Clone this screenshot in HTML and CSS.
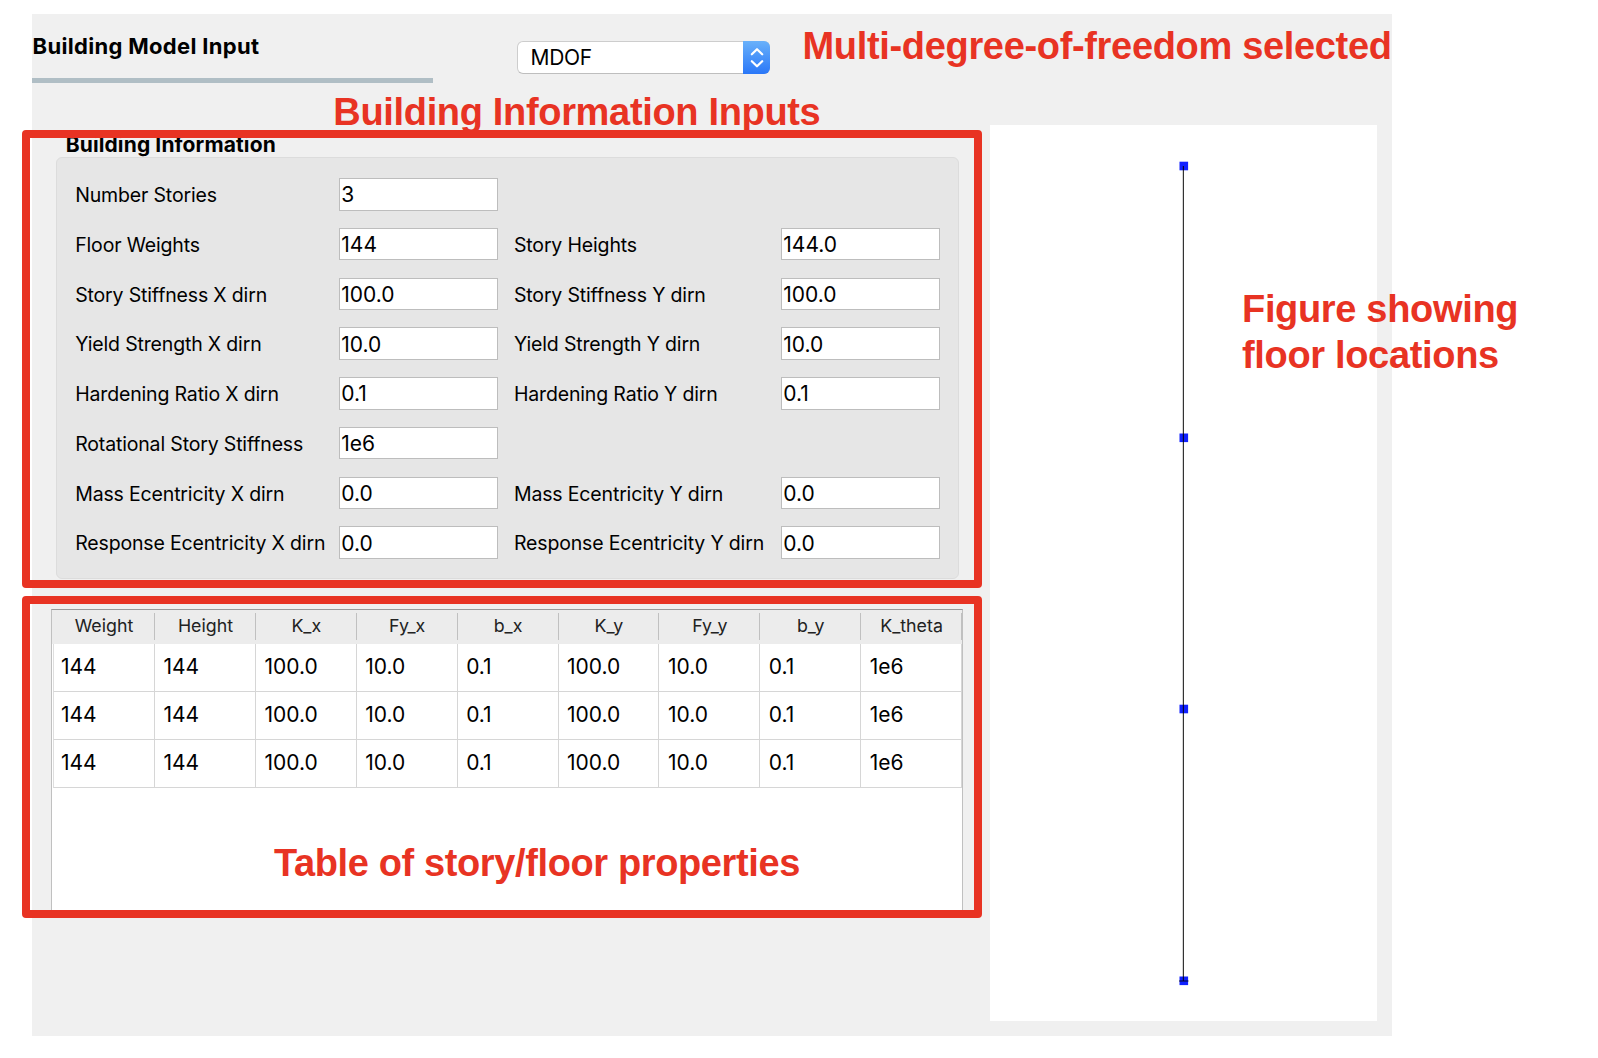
FILE: index.html
```html
<!DOCTYPE html>
<html lang="en">
<head>
<meta charset="utf-8">
<title>Building Model Input</title>
<link rel="stylesheet" href="styles.css">
</head>
<body>
<main class="window">
  <header class="topbar">
    <h1 class="page-title">Building Model Input</h1>
    <div class="select"><span>MDOF</span>
      <span class="select-button"><svg width="14" height="22" viewBox="0 0 14 22" fill="none" stroke="#fff" stroke-width="2.2" stroke-linecap="round" stroke-linejoin="round"><path d="M1.8 7.3 7 2.2l5.2 5.1M1.8 14.2 7 19.3l5.2-5.1"/></svg></span>
    </div>
  </header>
  <div class="content">
    <section class="left">
      <h2 class="group-title">Building Information</h2>
      <form class="group">
        <label>Number Stories</label><input value="3"><i></i><i></i>
        <label>Floor Weights</label><input value="144"><label class="second">Story Heights</label><input value="144.0">
        <label>Story Stiffness X dirn</label><input value="100.0"><label class="second">Story Stiffness Y dirn</label><input value="100.0">
        <label>Yield Strength X dirn</label><input value="10.0"><label class="second">Yield Strength Y dirn</label><input value="10.0">
        <label>Hardening Ratio X dirn</label><input value="0.1"><label class="second">Hardening Ratio Y dirn</label><input value="0.1">
        <label>Rotational Story Stiffness</label><input value="1e6"><i></i><i></i>
        <label>Mass Ecentricity X dirn</label><input value="0.0"><label class="second">Mass Ecentricity Y dirn</label><input value="0.0">
        <label>Response Ecentricity X dirn</label><input value="0.0"><label class="second">Response Ecentricity Y dirn</label><input value="0.0">
      </form>
      <div class="table-box">
        <table class="floors">
          <colgroup><col class="first-col"><col span="8"></colgroup>
          <thead><tr><th>Weight</th><th>Height</th><th>K_x</th><th>Fy_x</th><th>b_x</th><th>K_y</th><th>Fy_y</th><th>b_y</th><th>K_theta</th></tr></thead>
          <tbody>
            <tr><td>144</td><td>144</td><td>100.0</td><td>10.0</td><td>0.1</td><td>100.0</td><td>10.0</td><td>0.1</td><td>1e6</td></tr>
            <tr><td>144</td><td>144</td><td>100.0</td><td>10.0</td><td>0.1</td><td>100.0</td><td>10.0</td><td>0.1</td><td>1e6</td></tr>
            <tr><td>144</td><td>144</td><td>100.0</td><td>10.0</td><td>0.1</td><td>100.0</td><td>10.0</td><td>0.1</td><td>1e6</td></tr>
          </tbody>
        </table>
      </div>
    </section>
    <section class="figure">
      <svg width="387" height="896" viewBox="0 0 387 896">
        <g fill="#1021ff"><rect x="189.5" y="36.7" width="8.6" height="8.6"/><rect x="189.5" y="308.5" width="8.6" height="8.6"/><rect x="189.5" y="579.7" width="8.6" height="8.6"/><rect x="189.5" y="851.5" width="8.6" height="8.6"/></g>
        <path d="M193.4 41V856M189 856h9.5" fill="none" stroke="#000" stroke-opacity=".8" stroke-width="1.2"/>
      </svg>
    </section>
  </div>
</main>
<div class="frame frame-info"></div>
<div class="frame frame-table"></div>
<div class="note note-select">Multi-degree-of-freedom selected</div>
<div class="note note-info">Building Information Inputs</div>
<div class="note note-table">Table of story/floor properties</div>
<div class="note note-figure">Figure showing<br>floor locations</div>
</body>
</html>
```
FILE: styles.css
```css
* { box-sizing: border-box; }
body { margin: 0; background: #fff; color: #000; font-family: Inter, "Liberation Sans", sans-serif; position: relative; width: 1598px; height: 1058px; overflow: hidden; padding: 14px 0 0 32px; }
.window { width: 1360px; height: 1022px; background: #f0f0f0; }
.topbar { display: flex; align-items: flex-start; height: 111px; }
.page-title { margin: 0; width: 401px; height: 69px; border-bottom: 5px solid #b0bec5; padding: 18px 0 0 .5px; font-size: 22px; line-height: 28px; font-weight: 700; letter-spacing: .32px; }
.select { display: flex; justify-content: space-between; width: 253px; height: 33px; margin: 27px 0 0 84px; background: #fff; border: 1px solid #cdcdcd; border-bottom-color: #bebebe; border-radius: 6px; font-size: 21px; line-height: 31px; padding-left: 12.5px; letter-spacing: -.3px; }
.select-button { display: flex; align-items: center; justify-content: center; width: 27px; height: 33px; margin: -1px -1px 0 0; border-radius: 0 6px 6px 0; background: linear-gradient(#69b1fa, #2a77f8); }
.content { display: flex; }
.left { width: 958px; padding-left: 19px; }
.group-title { margin: 0; height: 32px; padding: 6px 0 0 14.7px; font-size: 21px; line-height: 28px; font-weight: 700; letter-spacing: .12px; }
.group { display: grid; grid-template-columns: 263.6px 159px 283px 159px; grid-auto-rows: 32.5px; row-gap: 17.27px; width: 903px; height: 422px; margin: 0 0 0 5px; padding: 20px 0 0 18.2px; background: #e6e6e6; border: 1px solid #dcdcdc; border-radius: 6px; }
.group label { font-size: 19.5px; line-height: 34px; letter-spacing: -.16px; white-space: nowrap; }
.group .second { padding-left: 16.2px; }
.group input { width: 159px; height: 32.5px; border: 1px solid #bdbdbd; background: #fff; border-radius: 0; padding: 1px 1px 0 1.5px; font: 21px Inter, sans-serif; color: #000; outline: none; }
.table-box { width: 912px; height: 305px; margin-top: 30px; padding-left: 1px; background: #fff; border: 1px solid #c0c0c0; border-top-color: #999; }
.floors { border-collapse: separate; border-spacing: 0; table-layout: fixed; width: 909px; }
.first-col { width: 102px; }
.floors th { height: 34px; padding: 0 0 3px; background: linear-gradient(#c0c0c0, #c0c0c0) right 3px / 1px 27px no-repeat #ececec; font-size: 17.8px; font-weight: 400; color: #222; }
.floors th:first-child { box-shadow: -1px 0 #ececec; }
.floors td { height: 48px; padding: 0 0 2px 8.5px; border-right: 1px solid #d6d6d6; border-bottom: 1px solid #d6d6d6; font-size: 21px; }
.floors td:first-child { border-left: 1px solid #dedede; padding-left: 7px; }
.figure { width: 387px; height: 896px; background: #fff; }
.figure svg { display: block; }
.frame { position: absolute; left: 22px; width: 960px; border: 8px solid #e83323; border-radius: 4px; }
.frame-info { top: 130px; height: 458px; }
.frame-table { top: 596px; height: 322px; }
.note { position: absolute; font: 700 38px/46px "Liberation Sans", Arial, sans-serif; letter-spacing: -.33px; color: #e83323; white-space: nowrap; }
.note-select { left: 802.5px; top: 23px; }
.note-info { left: 333.3px; top: 89px; }
.note-table { left: 274px; top: 840px; letter-spacing: -.38px; }
.note-figure { left: 1242px; top: 286px; }
```
